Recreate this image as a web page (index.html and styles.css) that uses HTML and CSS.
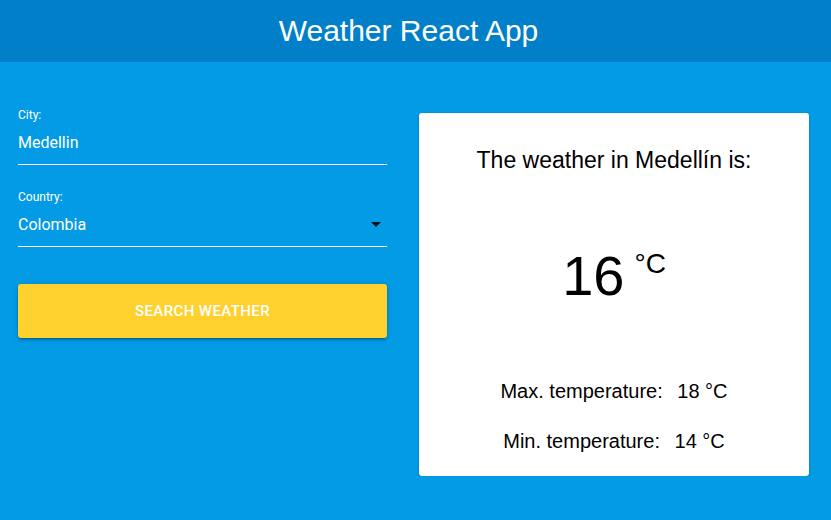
FILE: index.html
```html
<!DOCTYPE html>
<html lang="en">
<head>
<meta charset="utf-8">
<title>Weather React App</title>
<link rel="stylesheet" href="styles.css">
</head>
<body>
<header class="appbar">
  <h1 class="appbar-title">Weather React App</h1>
</header>
<main class="layout">
  <form class="search-form">
    <div class="field">
      <label class="field-label">City:</label>
      <div class="field-input">Medellin</div>
    </div>
    <div class="field">
      <label class="field-label">Country:</label>
      <div class="field-input field-select">
        <span>Colombia</span>
        <svg class="select-arrow" viewBox="0 0 24 24" width="24" height="24"><path d="M7 10l5 5 5-5z"/></svg>
      </div>
    </div>
    <button type="button" class="search-btn">Search Weather</button>
  </form>
  <section class="weather-card">
    <h2 class="weather-title">The weather in Medellín is:</h2>
    <div class="weather-temp"><span class="temp-value">16</span><span class="temp-unit">°C</span></div>
    <p class="weather-line">Max. temperature: <span class="line-value">18 °C</span></p>
    <p class="weather-line weather-line-last">Min. temperature: <span class="line-value">14 °C</span></p>
  </section>
</main>
</body>
</html>
```
FILE: styles.css
```css
html, body {
  margin: 0;
  padding: 0;
  background: #039be5;
  min-height: 100%;
}
body {
  font-family: "Liberation Sans", Arial, sans-serif;
}
.appbar {
  background: #017fc9;
  height: 62px;
  padding-right: 14px;
}
.appbar-title {
  margin: 0;
  font-family: "Liberation Sans", Arial, sans-serif;
  font-weight: 400;
  font-size: 30px;
  line-height: 62px;
  color: #fff;
  text-align: center;
}
.layout {
  display: grid;
  grid-template-columns: 369px 390px;
  column-gap: 32px;
  align-items: start;
  padding: 46px 22px 0 18px;
}
.search-form {
  display: flex;
  flex-direction: column;
  gap: 25px;
  font-family: Roboto, "Noto Sans", sans-serif;
  color: #fff;
}
.field {
  display: flex;
  flex-direction: column;
}
.field-label {
  font-size: 12px;
  line-height: 14px;
}
.field-input {
  margin-top: 11px;
  font-size: 16px;
  line-height: 19px;
  padding-bottom: 12px;
  border-bottom: 1px solid #fff;
}
.field-select {
  position: relative;
  display: flex;
  align-items: center;
}
.select-arrow {
  position: absolute;
  right: -1px;
  top: -3px;
  fill: rgba(0, 0, 0, 0.87);
}
.search-btn {
  margin-top: 12px;
  height: 54px;
  border: none;
  border-radius: 3px;
  background: #ffd12f;
  color: #fff;
  font-family: Roboto, "Noto Sans", sans-serif;
  font-weight: 500;
  font-size: 15px;
  letter-spacing: 0.4px;
  text-transform: uppercase;
  box-shadow: 0 1px 5px rgba(0, 0, 0, 0.2), 0 2px 2px rgba(0, 0, 0, 0.14), 0 3px 1px -2px rgba(0, 0, 0, 0.12);
}
.weather-card {
  margin-top: 5px;
  background: #fff;
  border-radius: 3px;
  box-shadow: 0 1px 3px rgba(0, 0, 0, 0.2), 0 1px 1px rgba(0, 0, 0, 0.14), 0 2px 1px -1px rgba(0, 0, 0, 0.12);
  padding: 34px 0 23px;
  text-align: center;
  color: #000;
}
.weather-title {
  margin: 0;
  font-weight: 400;
  font-size: 23px;
  line-height: 26px;
}
.weather-temp {
  margin-top: 72px;
  height: 60px;
  display: flex;
  justify-content: center;
  align-items: flex-start;
}
.temp-value {
  font-size: 56px;
  line-height: 62px;
}
.temp-unit {
  font-size: 28px;
  line-height: 28px;
  margin-left: 10px;
  margin-top: 5px;
}
.weather-line {
  margin: 74px 0 0;
  font-size: 20px;
  line-height: 24px;
}
.weather-line-last {
  margin-top: 26px;
}
.line-value {
  margin-left: 9px;
}
```
